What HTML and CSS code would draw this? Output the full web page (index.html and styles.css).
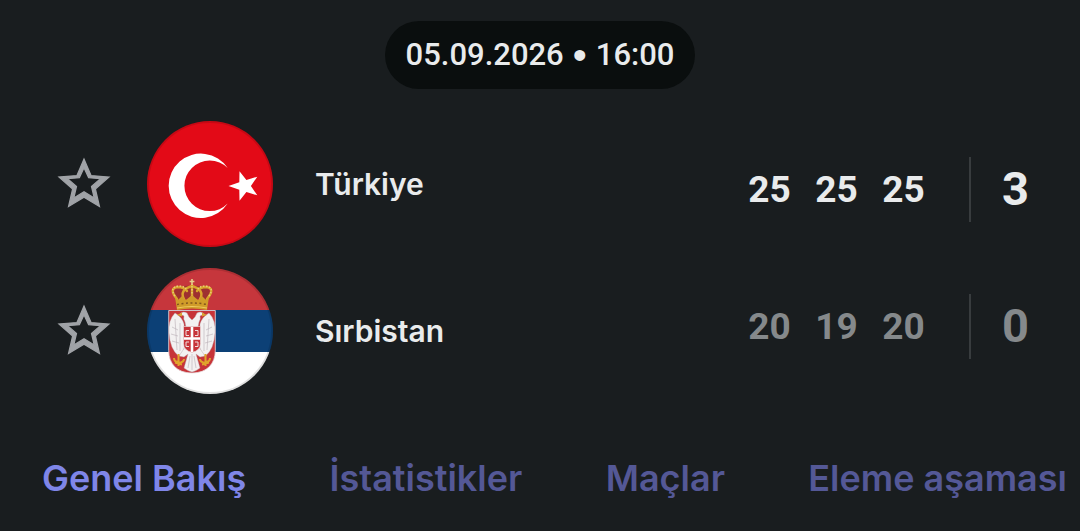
FILE: index.html
```
<!DOCTYPE html>
<html lang="tr">
<head>
<meta charset="utf-8">
<meta name="viewport" content="width=device-width, initial-scale=1">
<title>Türkiye - Sırbistan</title>
<link rel="stylesheet" href="styles.css">
</head>
<body>
<main class="match">
  <time class="kickoff" datetime="2026-09-05T16:00">05.09.2026 <span class="dot">•</span> 16:00</time>

  <section class="board">
    <ul class="teams">
      <li class="team">
        <button class="favorite" type="button" aria-label="Türkiye favorilere ekle">
          <svg class="star" viewBox="0 0 24 24" aria-hidden="true"><path d="M22 9.24l-7.19-.62L12 2 9.19 8.63 2 9.24l5.46 4.73L5.82 21 12 17.27 18.18 21l-1.63-7.03L22 9.24zM12 15.1l-4.1 2.5 1.1-4.65-3.6-3.1 4.75-.4L12 5.5l1.85 3.95 4.75.4-3.6 3.1 1.1 4.65L12 15.1z"/></svg>
        </button>
        <svg class="flag" viewBox="0 0 126 126" aria-hidden="true">
          <circle cx="63" cy="63" r="63" fill="#e30a17"/>
          <path fill="#fff" d="M80.7 47A32.2 32.2 0 1 0 80.7 82.6A25.3 25.3 0 1 1 80.7 47Z"/>
          <path fill="#fff" d="M81.5 65l10.8-3.8.2-11 6.9 8.7 10.9-3.2-6.4 9.3 6.4 9.3-10.9-3.2-6.9 8.7-.2-11z"/>
          <circle cx="63" cy="63" r="62" fill="none" stroke="#000" stroke-opacity=".12" stroke-width="2"/>
        </svg>
        <span class="name">Türkiye</span>
      </li>
      <li class="team">
        <button class="favorite" type="button" aria-label="Sırbistan favorilere ekle">
          <svg class="star" viewBox="0 0 24 24" aria-hidden="true"><path d="M22 9.24l-7.19-.62L12 2 9.19 8.63 2 9.24l5.46 4.73L5.82 21 12 17.27 18.18 21l-1.63-7.03L22 9.24zM12 15.1l-4.1 2.5 1.1-4.65-3.6-3.1 4.75-.4L12 5.5l1.85 3.95 4.75.4-3.6 3.1 1.1 4.65L12 15.1z"/></svg>
        </button>
        <svg class="flag" viewBox="0 0 126 126" aria-hidden="true">
          <clipPath id="disc"><circle cx="63" cy="63" r="63"/></clipPath>
          <g clip-path="url(#disc)">
            <path fill="#c6363c" d="M0 0h126v42H0z"/>
            <path fill="#0c4076" d="M0 42h126v42H0z"/>
            <path fill="#fff" d="M0 84h126v42H0z"/>
            <!-- crown -->
            <path fill="#9e3030" d="M28 31q-4-10 5-12 7-2 12-1 6-1 12 1 9 2 5 12z"/>
            <g fill="none" stroke="#d9a52c" stroke-width="2.4" stroke-linecap="round">
              <path d="M30 31q-9-11 1-12 6 0 9 4"/>
              <path d="M60 31q9-11-1-12-6 0-9 4"/>
              <path d="M37 31q-5-9 8-13 13 4 8 13"/>
              <path d="M45 17v14"/>
            </g>
            <path stroke="#e8c775" stroke-width="1.6" stroke-dasharray="1.5 1.5" fill="none" d="M28 28q-6-9 4-10 5 0 8 4M62 28q6-9-4-10-5 0-8 4M45 18v13"/>
            <path stroke="#e6cf8b" stroke-width="1.6" d="M45 11v6M42.6 13.5h4.8"/>
            <path fill="#d09c29" d="M28 29l3 3 4-4 4 4 6-5 6 5 4-4 4 4 3-3-2 13q-15-3-30 0z"/>
            <path stroke="#83561d" stroke-width="1.5" stroke-dasharray="2 2.5" d="M30 36.5q15-3 30 0" fill="none"/>
            <path stroke="#f0ca61" stroke-width="1.2" d="M30 40q15-3 30 0" fill="none"/>
            <!-- shield -->
            <path fill="#c73439" stroke="#e8dfe2" stroke-width=".8" d="M21.7 42.5h46.6v40c0 13-8 22.5-23.3 22.5s-23.3-9.5-23.3-22.5z"/>
            <!-- eagle -->
            <g fill="#f3f1f1" stroke="#b9a7ad" stroke-width=".4">
              <path d="M33 46q3-3.5 7-1l2 4 3 3 3-3 2-4q4-2.5 7 1l-4 2q1 3-1 6l-1 5H39l-1-5q-2-3-1-6z"/>
              <path d="M37 56q-2-7-9-11-7 7-6 20 1 16 9.500 23 6-4 6-11z"/>
              <path d="M53 56q2-7 9-11 7 7 6 20-1 16-9.500 23-6-4-6-11z"/>
              <path d="M38 79l-6 9 5 1 4-3-4 14 3 2 2 1 3 1 3-1 2-1 3-2-4-14 4 3 5-1-6-9z"/>
            </g>
            <path fill="none" stroke="#b8aeb5" stroke-width=".6" d="M25 59l6 3M24 66l7 2M25 73l7 2M28 51l2 31M33 55v28M65 59l-6 3M66 66l-7 2M65 73l-7 2M62 51l-2 31M57 55v28M43 88l-2 12M45 86v16M47 88l2 12"/>
            <path fill="#d8a334" d="M30 47l5-2.5v4zM60 47l-5-2.5v4z"/>
            <path fill="#c73439" stroke="#eee" stroke-width=".6" d="M36.5 58.5h17v17q0 7-8.5 9-8.5-2-8.5-9z"/>
            <path stroke="#fff" stroke-width="2.6" d="M45 59v25M37 70.5h16"/>
            <path fill="none" stroke="#f1dddd" stroke-width="1" d="M42 62.5h-3v5h3M48 62.5h3v5h-3M42 74h-3v4.500h3M48 74h3v4.500h-3"/>
            <g fill="none" stroke="#e0a42b" stroke-width="2">
              <path d="M31.5 86v12M27 90q0 4 4.500 4M37 91q0 3-5 4M28 94.500l7 2"/>
              <path d="M58.5 86v12M63 90q0 4-4.500 4M53 91q0 3 5 4M62 94.500l-7 2"/>
            </g>
            <circle cx="63" cy="63" r="62" fill="none" stroke="#000" stroke-opacity=".12" stroke-width="2"/>
          </g>
        </svg>
        <span class="name">Sırbistan</span>
      </li>
    </ul>

    <table class="scores" aria-label="Set sonuçları">
      <tbody>
        <tr class="won"><td>25</td><td>25</td><td>25</td><td class="total">3</td></tr>
        <tr class="lost"><td>20</td><td>19</td><td>20</td><td class="total">0</td></tr>
      </tbody>
    </table>
  </section>

  <nav class="tabs">
    <a class="tab active" href="#genel" aria-current="page">Genel Bakış</a>
    <a class="tab" href="#istatistikler">İstatistikler</a>
    <a class="tab" href="#maclar">Maçlar</a>
    <a class="tab" href="#eleme">Eleme aşaması</a>
  </nav>
</main>
</body>
</html>
```
FILE: styles.css
```
* {
  box-sizing: border-box;
}

body {
  margin: 0;
  background: #191d1f;
  color: #e9ebec;
  font-family: Inter, "Liberation Sans", sans-serif;
}

.match {
  display: flex;
  flex-direction: column;
  padding-top: 21px;
}

.kickoff {
  display: flex;
  align-items: center;
  align-self: center;
  gap: 9px;
  padding: 0 21px;
  border-radius: 34px;
  background: #0a0e0e;
  font-family: Roboto, sans-serif;
  font-size: 31px;
  font-weight: 500;
  line-height: 68px;
}

.dot {
  font-family: "Liberation Sans", sans-serif;
  font-size: 40px;
  line-height: 1;
}

.board {
  display: flex;
  align-items: center;
  justify-content: space-between;
  padding: 32px 18px 0 54px;
}

.teams {
  display: flex;
  flex-direction: column;
  gap: 21px;
  margin: 0;
  padding: 0;
  list-style: none;
}

.team {
  display: flex;
  align-items: center;
}

.favorite {
  display: flex;
  padding: 0;
  border: 0;
  background: none;
  color: #a0a3a7;
}

.star {
  width: 60px;
  height: 60px;
  fill: currentColor;
  stroke: currentColor;
  stroke-width: 0.5;
}

.flag {
  width: 126px;
  height: 126px;
  margin: 0 42px 0 33px;
}

.name {
  font-size: 30px;
  font-weight: 600;
}

.scores {
  font-family: Roboto, sans-serif;
  font-size: 37px;
  font-weight: 700;
  text-align: center;
}

.scores tbody {
  display: grid;
  gap: 72px;
}

.scores tr {
  display: flex;
  line-height: 64px;
}

.scores td {
  width: 67px;
  padding: 1px 0 0;
}

.scores .total {
  width: 91px;
  margin-left: 32px;
  padding: 0;
  border-left: 2px solid #383c3e;
  font-size: 47px;
}

.lost {
  color: #85898b;
}

.tabs {
  display: flex;
  justify-content: space-between;
  padding: 62px 13px 0 42px;
}

.tab {
  color: #545896;
  font-size: 36px;
  font-weight: 600;
  line-height: 44px;
  text-decoration: none;
  white-space: nowrap;
}

.tab.active {
  color: #7f86e8;
}
```
